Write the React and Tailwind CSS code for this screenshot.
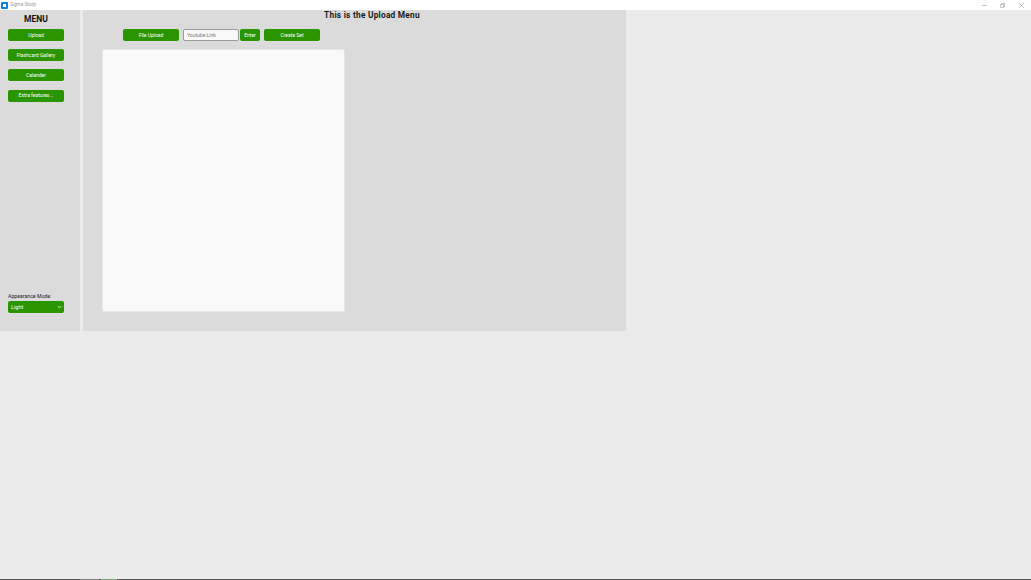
// Sigma Study - upload menu
const GreenButton = ({ label, className = '' }) => (
  <button className={`h-[12px] bg-[#2b9500] text-white text-[5px] leading-none rounded-[2px] flex items-center justify-center shrink-0 ${className}`}>
    {label}
  </button>
);

const menuItems = ['Upload', 'Flashcard Gallery', 'Calander', 'Extra features...'];

export default function App() {
  return (
    <div className="w-[1031px] h-[580px] overflow-hidden flex flex-col bg-[#ebebeb] font-['Roboto',sans-serif]">
      {/* title bar */}
      <div className="h-[10px] shrink-0 bg-white flex items-center pl-[1px] pr-[7.5px]">
        <svg width="7" height="7" viewBox="0 0 7 7" className="shrink-0">
          <rect width="7" height="7" rx="1" fill="#0a84e0" />
          <rect x="2" y="2" width="3" height="3" fill="#ffffff" />
        </svg>
        <span className="ml-[2px] text-[4.7px] leading-none text-[#9a9a9a]">Sigma Study</span>
        <div className="ml-auto flex items-center gap-[13.5px]">
          <svg width="5" height="5" viewBox="0 0 5 5"><path d="M0 2.5H5" stroke="#8a8a8a" strokeWidth="0.5" /></svg>
          <svg width="5" height="5" viewBox="0 0 5 5" fill="none"><path d="M0.5 1.5H3.5V4.5H0.5ZM1.5 1.5V0.5H4.5V3.5H3.5" stroke="#8a8a8a" strokeWidth="0.5" /></svg>
          <svg width="5" height="5" viewBox="0 0 5 5"><path d="M0 0L5 5M5 0L0 5" stroke="#8a8a8a" strokeWidth="0.5" /></svg>
        </div>
      </div>

      <div className="h-[321px] shrink-0 flex gap-[3px]">
        {/* sidebar */}
        <div className="w-[80px] bg-[#dbdbdb] rounded-r-[1px] pr-[8px] flex flex-col items-center">
          <div className="mt-[4px] h-[10px] text-[8.5px] leading-[10px] font-bold text-[#111111]">MENU</div>
          <div className="mt-[5px] flex flex-col gap-[8.2px]">
            {menuItems.map((item) => (
              <GreenButton key={item} label={item} className="w-[56px]" />
            ))}
          </div>
          <div className="mt-auto mb-[18.5px] w-[56px]">
            <div className="text-[5.2px] leading-[6px] mb-[2px] text-[#222222]">Appearance Mode:</div>
            <div className="h-[11.5px] bg-[#2b9500] rounded-[2px] flex items-center justify-between pl-[3px] pr-[2px] text-[5.5px] text-white">
              <span>Light</span>
              <svg width="5" height="4" viewBox="0 0 5 4" fill="none"><path d="M0.7 1L2.5 2.8L4.3 1" stroke="#ffffff" strokeWidth="0.8" /></svg>
            </div>
          </div>
        </div>

        {/* upload panel */}
        <div className="w-[543px] bg-[#dbdbdb] rounded-br-[1px] flex flex-col">
          <div className="mt-[1px] h-[9px] pl-[35px] text-center text-[8.3px] leading-[9px] font-bold tracking-[0.25px] text-[#1a1a1a]">
            This is the Upload Menu
          </div>
          <div className="mt-[9px] ml-[40px] flex items-center">
            <GreenButton label="File Upload" className="w-[56px]" />
            <input
              placeholder="Youtube Link"
              className="ml-[4px] w-[56px] h-[12px] bg-[#f9f9f9] border border-[#979da2] rounded-[2px] px-[3px] text-[5px] placeholder:text-[#777777] outline-none"
            />
            <GreenButton label="Enter" className="ml-[1px] w-[20px]" />
            <GreenButton label="Create Set" className="ml-[4px] w-[56px]" />
          </div>
          <div className="mt-[8px] ml-[19px] w-[243px] h-[263px] bg-[#f9f9f9] border border-[#e6e6e6] rounded-[2px]"></div>
        </div>
      </div>

      {/* taskbar sliver */}
      <div className="mt-auto h-[1px] bg-[#555555] flex">
        <div className="ml-[80px] w-[19px] bg-[#7a7a7a]"></div>
        <div className="ml-[2px] w-[16px] bg-[#7f9f7f]"></div>
      </div>
    </div>
  );
}
